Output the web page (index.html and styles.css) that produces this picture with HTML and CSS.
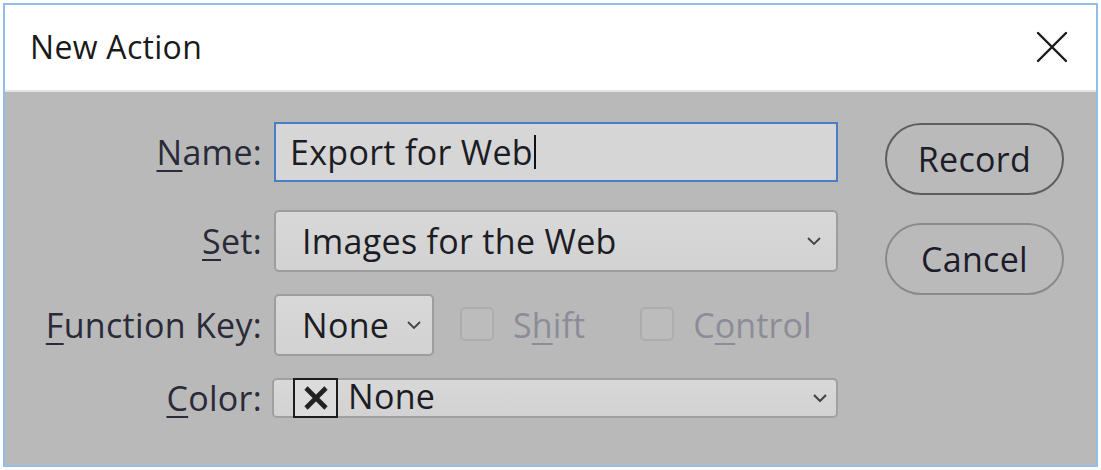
FILE: index.html
```html
<!DOCTYPE html>
<html>
<head>
<meta charset="utf-8">
<link rel="stylesheet" href="styles.css">
</head>
<body>
<div class="dialog">
  <div class="titlebar">
    <span class="title">New Action</span>
    <svg class="close" width="34" height="34" viewBox="0 0 34 34"><path d="M3 3 L31 31 M31 3 L3 31" stroke="#1a1a1a" stroke-width="2.4" stroke-linecap="round" fill="none"/></svg>
  </div>
  <div class="body">
    <div class="form">
      <label class="lbl first-lbl"><span><u>N</u>ame:</span></label>
      <div class="input"><span>Export for Web</span><span class="caret"></span></div>

      <label class="lbl"><span><u>S</u>et:</span></label>
      <div class="select"><span class="val">Images for the Web</span><svg class="chev" width="16" height="10" viewBox="0 0 16 10"><path d="M2 2 L8 8 L14 2" stroke="#444" stroke-width="1.8" fill="none"/></svg></div>

      <label class="lbl"><span><u>F</u>unction Key:</span></label>
      <div class="fkrow">
        <div class="select small"><span class="val">None</span><svg class="chev" width="16" height="10" viewBox="0 0 16 10"><path d="M2 2 L8 8 L14 2" stroke="#444" stroke-width="1.8" fill="none"/></svg></div>
        <div class="check first"><span class="box"></span><span class="ctext">S<u>h</u>ift</span></div>
        <div class="check second"><span class="box"></span><span class="ctext">C<u>o</u>ntrol</span></div>
      </div>

      <label class="lbl"><span><u>C</u>olor:</span></label>
      <div class="select color"><span class="swatch"><svg width="28" height="28" viewBox="0 0 28 28"><path d="M4 4 L24 24 M24 4 L4 24" stroke="#222" stroke-width="4.6" fill="none"/></svg></span><span class="val">None</span><svg class="chev" width="16" height="10" viewBox="0 0 16 10"><path d="M2 2 L8 8 L14 2" stroke="#444" stroke-width="2.2" fill="none"/></svg></div>
    </div>
    <div class="buttons">
      <div class="btn primary">Record</div>
      <div class="btn">Cancel</div>
    </div>
  </div>
</div>
</body>
</html>
```

FILE: styles.css
```css
html, body {
  margin: 0;
  padding: 0;
  background: #ffffff;
}
body {
  padding: 3px;
  font-family: "Open Sans", "Noto Sans", sans-serif;
  color: #1f1f28;
}
.dialog {
  box-sizing: border-box;
  width: 1095px;
  height: 464px;
  border: 2px solid #93bde8;
  display: flex;
  flex-direction: column;
}
.titlebar {
  box-sizing: border-box;
  height: 87px;
  background: #ffffff;
  display: flex;
  align-items: center;
  justify-content: space-between;
  padding: 0 27px 0 25px;
  border-bottom: 2px solid #e4e4e4;
}
.title {
  font-size: 32px;
  color: #1a1a1a;
  letter-spacing: 0.3px;
  margin-top: -2px;
}
.close {
  display: block;
  margin-top: -2px;
}
.body {
  flex: 1;
  background: #b9b9b9;
  display: flex;
  padding-top: 30px;
}
.form {
  display: grid;
  grid-template-columns: 257px 564px;
  grid-template-rows: 66px 62px 62px 40px;
  column-gap: 12px;
  row-gap: 22px;
}
.lbl {
  display: flex;
  align-items: center;
  justify-content: flex-end;
  font-size: 34px;
  letter-spacing: 0.3px;
  color: #2a2a38;
  white-space: nowrap;
}
.first-lbl {
  padding-bottom: 6px;
}
.lbl u, .ctext u {
  text-underline-offset: 5px;
  text-decoration-thickness: 2px;
}
.input {
  height: 60px;
  box-sizing: border-box;
  border: 2px solid #4b7bc6;
  background: #d6d6d6;
  display: flex;
  align-items: center;
  padding-left: 14px;
  font-size: 34px;
  letter-spacing: 0.3px;
  color: #1c1c24;
}
.caret {
  display: inline-block;
  width: 2px;
  height: 34px;
  background: #111;
  margin-left: 1px;
}
.select {
  height: 62px;
  box-sizing: border-box;
  border: 2px solid #9d9d9d;
  border-radius: 5px;
  background: linear-gradient(#d8d8d8, #d2d2d2);
  display: flex;
  align-items: center;
  padding: 0 14px 0 26px;
  font-size: 34px;
  letter-spacing: 0.3px;
  color: #1c1c24;
}
.select .val { flex: 1; }
.chev { display: block; }
.fkrow {
  display: flex;
  align-items: center;
}
.select.small {
  width: 160px;
  padding-left: 26px;
  padding-right: 10px;
}
.check {
  display: flex;
  align-items: center;
  font-size: 34px;
  letter-spacing: 0.1px;
  color: #8c8c98;
}
.check.first { margin-left: 26px; }
.check.second { margin-left: 55px; }
.box {
  width: 34px;
  height: 34px;
  box-sizing: border-box;
  border: 2px solid #adadad;
  border-radius: 5px;
  background: #bcbcbc;
  margin-right: 19px;
  margin-top: -2px;
}
.select.color {
  height: 40px;
  margin-left: -2px;
  padding: 0 8px 0 19px;
  border: 2px solid #a0a0a0;
}
.swatch {
  width: 45px;
  height: 40px;
  box-sizing: border-box;
  border: 2px solid #1c1c1c;
  background: #dcdcdc;
  display: flex;
  align-items: center;
  justify-content: center;
  margin-right: 10px;
}
.swatch svg { display: block; }
.color .val {
  margin-top: -4px;
}
.buttons {
  display: flex;
  flex-direction: column;
  margin-left: 47px;
  gap: 28px;
  padding-top: 1px;
}
.btn {
  width: 179px;
  height: 72px;
  box-sizing: border-box;
  border: 2px solid #8a8a8a;
  border-radius: 36px;
  display: flex;
  align-items: center;
  justify-content: center;
  font-size: 34px;
  letter-spacing: 0.3px;
  color: #1c1c2a;
  background: #bababa;
}
.btn.primary {
  border-color: #5e5e5e;
}
```
